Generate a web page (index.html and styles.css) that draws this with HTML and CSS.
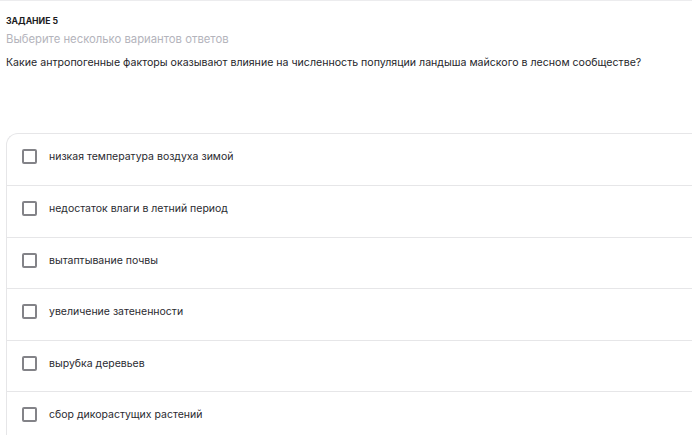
FILE: index.html
```html
<!DOCTYPE html>
<html lang="ru">
<head>
<meta charset="utf-8">
<title>Задание 5</title>
<link rel="stylesheet" href="styles.css">
</head>
<body>
<div class="page">
  <header class="task-head">
    <div class="task-num">ЗАДАНИЕ 5</div>
    <div class="task-hint">Выберите несколько вариантов ответов</div>
    <div class="task-question">Какие антропогенные факторы оказывают влияние на численность популяции ландыша майского в лесном сообществе?</div>
  </header>
  <ul class="options">
    <li class="option"><span class="box"></span><span class="label">низкая температура воздуха зимой</span></li>
    <li class="option"><span class="box"></span><span class="label">недостаток влаги в летний период</span></li>
    <li class="option"><span class="box"></span><span class="label">вытаптывание почвы</span></li>
    <li class="option"><span class="box"></span><span class="label">увеличение затененности</span></li>
    <li class="option"><span class="box"></span><span class="label">вырубка деревьев</span></li>
    <li class="option"><span class="box"></span><span class="label">сбор дикорастущих растений</span></li>
  </ul>
</div>
</body>
</html>
```
FILE: styles.css
```css
html, body {
  margin: 0;
  padding: 0;
  background: #fff;
}

body {
  font-family: Inter, "Noto Sans", sans-serif;
  color: #1f1f24;
  overflow: hidden;
}

.page {
  border-top: 1px solid #ececee;
  padding: 0 0 0 6px;
}

.task-head {
  padding-top: 14px;
}

.task-num {
  font-size: 8.7px;
  font-weight: 700;
  line-height: 12px;
  color: #1c1c22;
}

.task-hint {
  margin-top: 5px;
  font-size: 11.3px;
  line-height: 14px;
  color: #b4b4bc;
}

.task-question {
  margin-top: 10px;
  font-size: 10.6px;
  line-height: 14px;
  color: #26262b;
}

.options {
  list-style: none;
  margin: 63px -20px 0 0;
  padding: 0;
  border: 1px solid #e6e6e8;
  border-right: none;
  border-radius: 12px 0 0 0;
}

.option {
  display: flex;
  align-items: center;
  gap: 12px;
  padding: 15px 0 20.6px 15px;
  border-top: 1px solid #e6e6e8;
}

.option:first-child {
  border-top: none;
  padding-bottom: 21px;
}

.box {
  width: 11px;
  height: 11px;
  border: 2px solid #838388;
  border-radius: 2px;
  flex: none;
}

.label {
  font-size: 10.5px;
  line-height: 15px;
  color: #2a2a30;
}
```
